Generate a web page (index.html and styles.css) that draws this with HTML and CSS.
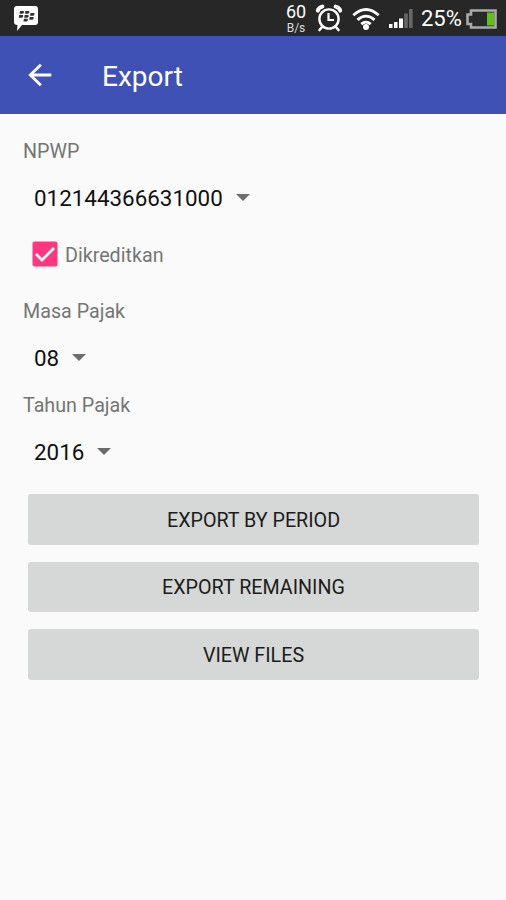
FILE: index.html
```html
<!DOCTYPE html>
<html lang="id">
<head>
    <meta charset="UTF-8">
    <title>Export</title>
    <link rel="stylesheet" href="styles.css">
</head>
<body>
    <div class="status-bar">
        <svg class="icon-bbm" width="26" height="27" viewBox="0 0 26 27">
            <path d="M4 1h18q3 0 3 3v13q0 3-3 3H9l-5 6 .5-6Q1 20 1 17V4q0-3 3-3z" fill="#fff"/>
            <g fill="#333">
                <path d="M7 6h3.2q1 0 .8 1.3T9.6 8.7H6.5zM12.4 6h3.2q1 0 .8 1.3T15 8.7h-3.1z"/>
                <path d="M6.2 10h3.2q1 0 .8 1.3t-1.4 1.4H5.7zM11.7 10h3.2q1 0 .8 1.3t-1.4 1.4h-3.1zM17.5 8h3.2q1 0 .8 1.3t-1.4 1.4H17z"/>
                <path d="M16.7 12h3.2q1 0 .8 1.3t-1.4 1.4h-3.1zM10.9 13.7h3.2q1 0 .8 1.3t-1.4 1.4h-3.1z"/>
            </g>
        </svg>
        <div class="status-right">
            <div class="speed">
                <span class="speed-value">60</span>
                <span class="speed-unit">B/s</span>
            </div>
            <svg class="icon-alarm" width="28" height="28" viewBox="0 0 28 28" fill="none" stroke="#fff">
                <circle cx="14" cy="15" r="9.6" stroke-width="2.4"/>
                <path d="M13.5 9v7H19" stroke-width="2.2"/>
                <path d="M2.8 6.6Q3.6 3.4 7.4 2.6M25.2 6.6Q24.4 3.4 20.6 2.6" stroke-width="4" stroke-linecap="round"/>
                <path d="M7.5 22.5L4.5 26M20.5 22.5l3 3.5" stroke-width="2.6" stroke-linecap="round"/>
            </svg>
            <svg class="icon-wifi" width="28" height="24" viewBox="0 0 28 24" fill="none" stroke="#fff" stroke-width="2.8">
                <path d="M1.3 8.3q12.7-11.6 25.4 0"/>
                <path d="M5.5 12.9q8.5-7.6 17 0"/>
                <path d="M9.3 17.1q4.7-4 9.4 0"/>
                <circle cx="14" cy="20" r="3" fill="#fff" stroke="none"/>
            </svg>
            <svg class="icon-signal" width="24" height="19" viewBox="0 0 24 19">
                <path d="M0 15h3.5v4H0zM5 13h3.5v6H5zM10 9.5h4V19h-4z" fill="#fff"/>
                <path d="M15.2 4.5h3.6V19h-3.6zM20 0h3.7v19H20z" fill="#666"/>
            </svg>
            <span class="battery-text">25%</span>
            <svg class="icon-battery" width="31" height="20" viewBox="0 0 31 20">
                <path d="M5 1.5h24.5v17H5V15H1.5V5.5H5z" fill="#292929" stroke="#aaa" stroke-width="2.6"/>
                <path d="M21 3.5h7v13h-7z" fill="#5fc018"/>
            </svg>
        </div>
    </div>

    <div class="toolbar">
        <svg class="icon-back" width="24" height="24" viewBox="0 0 24 24" fill="none" stroke="#fff" stroke-width="2.8">
            <path d="M23.3 12H2.5M12.8 1.8L2.3 12l10.5 10.2"/>
        </svg>
        <h1 class="title">Export</h1>
    </div>

    <div class="content">
        <div class="label">NPWP</div>
        <div class="spinner">012144366631000<span class="arrow"></span></div>

        <div class="checkbox">
            <svg class="box" width="26" height="26" viewBox="0 0 26 26">
                <rect x="0.5" y="0.5" width="25" height="25" rx="2" fill="#ff3680"/>
                <path d="M4 13l6 6L22 7" fill="none" stroke="#fff" stroke-width="2.7"/>
            </svg>
            <span class="checkbox-text">Dikreditkan</span>
        </div>

        <div class="label">Masa Pajak</div>
        <div class="spinner">08<span class="arrow"></span></div>

        <div class="label">Tahun Pajak</div>
        <div class="spinner">2016<span class="arrow"></span></div>

        <div class="buttons">
            <button class="btn">EXPORT BY PERIOD</button>
            <button class="btn">EXPORT REMAINING</button>
            <button class="btn">VIEW FILES</button>
        </div>
    </div>
</body>
</html>
```

FILE: styles.css
```css
* {
    box-sizing: border-box;
}

body {
    margin: 0;
    min-height: 100vh;
    background-color: #fafafa;
    font-family: Roboto, sans-serif;
    overflow: hidden;
}

/* status bar */
.status-bar {
    display: flex;
    justify-content: space-between;
    height: 36px;
    padding: 0 9px 0 13px;
    background-color: #272727;
    color: #fff;
}

.icon-bbm {
    margin-top: 5px;
}

.status-right {
    display: flex;
    align-items: flex-start;
}

.speed {
    display: flex;
    flex-direction: column;
    align-items: center;
    width: 22px;
    margin: 2px 8px 0 0;
}

.speed-value {
    font-size: 18px;
    line-height: 19px;
}

.speed-unit {
    font-size: 12px;
    line-height: 14px;
    color: #ddd;
}

.icon-alarm {
    margin: 4px 9px 0 0;
}

.icon-wifi {
    margin: 7px 9px 0 0;
}

.icon-signal {
    margin: 9px 8px 0 0;
}

.battery-text {
    width: 45px;
    font-size: 22px;
    line-height: 38px;
    white-space: nowrap;
}

.icon-battery {
    margin-top: 9px;
}

/* toolbar */
.toolbar {
    display: flex;
    align-items: center;
    height: 78px;
    padding-left: 28px;
    background-color: #3f51b5;
    color: #fff;
}

.title {
    margin: 3px 0 0 50px;
    font-size: 28px;
    font-weight: 400;
}

/* form */
.content {
    padding: 26px 23px 0;
}

.label {
    height: 24px;
    font-size: 19.7px;
    line-height: 24px;
    color: #757575;
}

.spinner {
    display: flex;
    align-items: center;
    height: 70px;
    padding: 0 0 2px 11px;
    font-size: 22.4px;
    color: #111;
}

.arrow {
    margin: 0 0 2px 13px;
    border: 7px solid transparent;
    border-top-color: #6d6d6d;
    border-bottom: 0;
}

.checkbox {
    display: flex;
    align-items: center;
    height: 42px;
    margin-bottom: 24px;
    padding: 0 0 2px 9px;
}

.checkbox-text {
    margin: 2px 0 0 7px;
    font-size: 19.7px;
    color: #757575;
}

.buttons {
    display: flex;
    flex-direction: column;
    gap: 17px;
    margin: 6px 4px 0 5px;
}

.btn {
    height: 50.5px;
    padding: 2px 0 0;
    border: 0;
    border-radius: 3px;
    background-color: #d6d7d7;
    font-family: inherit;
    font-size: 19.7px;
    color: #1c1c1c;
}
```
